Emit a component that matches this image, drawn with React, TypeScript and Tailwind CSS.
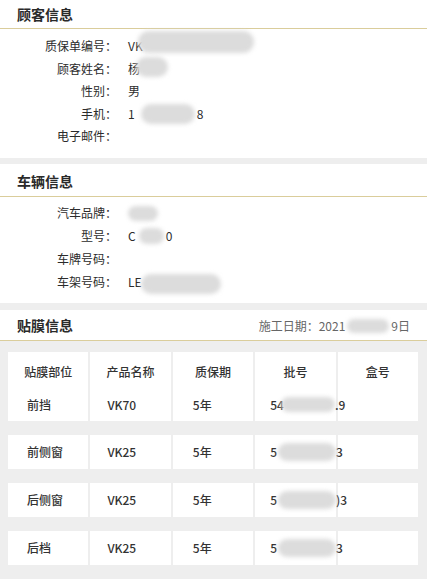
import React from "react";

// redaction smear, as in the source screenshot
function Smear({ className }: { className: string }) {
  return <span className={"inline-block align-middle rounded-full bg-[#dcdcdc] blur-[2px] " + className} />;
}

type Field = { label: string; value?: React.ReactNode };

const customer: Field[] = [
  {
    label: "质保单编号：",
    value: (
      <>
        VK<Smear className="-ml-[5px] w-[116px] h-[22px] -mt-[8px]" />
      </>
    ),
  },
  {
    label: "顾客姓名：",
    value: (
      <>
        杨<Smear className="-ml-[4px] w-[32px] h-[20px] -mt-[4px]" />
      </>
    ),
  },
  { label: "性别：", value: "男" },
  {
    label: "手机：",
    value: (
      <>
        1<Smear className="ml-[6px] w-[54px] h-[20px]" />
        <span className="ml-[2px]">8</span>
      </>
    ),
  },
  { label: "电子邮件：" },
];

const vehicle: Field[] = [
  { label: "汽车品牌：", value: <Smear className="w-[30px] h-[15px]" /> },
  {
    label: "型号：",
    value: (
      <>
        C<Smear className="ml-[3px] w-[25px] h-[16px]" />
        <span className="ml-[2px]">0</span>
      </>
    ),
  },
  { label: "车牌号码：" },
  {
    label: "车架号码：",
    value: (
      <>
        LE<Smear className="-ml-[1px] w-[80px] h-[20px] mt-[4px]" />
      </>
    ),
  },
];

const films = [
  { part: "前挡", product: "VK70", term: "5年", tail: ".9" },
  { part: "前侧窗", product: "VK25", term: "5年", tail: "3" },
  { part: "后侧窗", product: "VK25", term: "5年", tail: ")3" },
  { part: "后档", product: "VK25", term: "5年", tail: "3" },
];

const headers = ["贴膜部位", "产品名称", "质保期", "批号", "盒号"];

function SectionTitle({ title, tall, right }: { title: string; tall?: string; right?: React.ReactNode }) {
  return (
    <div className={"flex items-center justify-between border-b border-[#dacd9b] pl-[17px] pr-[17px] " + (tall ?? "h-[29px]")}>
      <span className="text-[14px] font-bold text-[#2a2a2a]">{title}</span>
      {right}
    </div>
  );
}

function Fields({ rows, rowH }: { rows: Field[]; rowH: string }) {
  return (
    <div>
      {rows.map((r) => (
        <div key={r.label} className={"flex items-center text-[12px] text-[#2b2b2b] " + rowH}>
          <span className="w-[117px] shrink-0 text-right">{r.label}</span>
          <span className="ml-[11px] flex items-center whitespace-nowrap">{r.value}</span>
        </div>
      ))}
    </div>
  );
}

export default function App() {
  return (
    <div
      className="w-[427px] h-[579px] overflow-hidden bg-[#eeeeee]"
      style={{ fontFamily: '"Noto Sans CJK SC", "Noto Sans", sans-serif' }}
    >
      {/* 顾客信息 */}
      <section className="bg-white pb-[10px]">
        <SectionTitle title="顾客信息" />
        <div className="pt-[6px]">
          <Fields rows={customer} rowH="h-[22.5px]" />
        </div>
      </section>

      {/* 车辆信息 */}
      <section className="mt-[6px] bg-white pb-[9px]">
        <SectionTitle title="车辆信息" tall="h-[33px] pt-[3px]" />
        <div className="pt-[5px]">
          <Fields rows={vehicle} rowH="h-[23px]" />
        </div>
      </section>

      {/* 贴膜信息 */}
      <section className="mt-[7px]">
        <div className="bg-white">
          <SectionTitle
            title="贴膜信息"
            tall="h-[31px] pt-[2px]"
            right={
              <span className="flex items-center text-[12px] text-[#666]">
                施工日期：2021<Smear className="ml-[2px] w-[42px] h-[14px]" />
                <span className="ml-[2px]">9日</span>
              </span>
            }
          />
        </div>

        <div className="flex flex-col gap-[14px] pl-[8px] pr-[9px] pt-[11px]">
          {films.map((f, i) => (
            <div key={f.part} className="grid grid-cols-5 gap-[2px] text-[12px] font-medium text-[#333]">
              {i === 0
                ? headers.map((h, c) => (
                    <div key={h} className="flex h-[69px] flex-col bg-white">
                      <div className="flex h-[40px] items-center justify-center">{h}</div>
                      <div className="flex h-[26px] items-center">
                        {c === 0 && <span className="pl-[19px]">{f.part}</span>}
                        {c === 1 && <span className="pl-[17px]">{f.product}</span>}
                        {c === 2 && <span className="pl-[20px]">{f.term}</span>}
                        {c === 3 && (
                          <span className="relative z-10 pl-[15px] flex items-center whitespace-nowrap">
                            54<Smear className="-ml-[3px] w-[54px] h-[15px]" />
                            <span>{f.tail}</span>
                          </span>
                        )}
                      </div>
                    </div>
                  ))
                : [0, 1, 2, 3, 4].map((c) => (
                    <div key={c} className="flex h-[34px] items-center bg-white">
                      {c === 0 && <span className="pl-[19px]">{f.part}</span>}
                      {c === 1 && <span className="pl-[17px]">{f.product}</span>}
                      {c === 2 && <span className="pl-[20px]">{f.term}</span>}
                      {c === 3 && (
                        <span className="relative z-10 pl-[15px] flex items-center whitespace-nowrap">
                          5<Smear className="ml-[1px] w-[58px] h-[18px]" />
                          <span>{f.tail}</span>
                        </span>
                      )}
                    </div>
                  ))}
            </div>
          ))}
        </div>
      </section>
    </div>
  );
}
